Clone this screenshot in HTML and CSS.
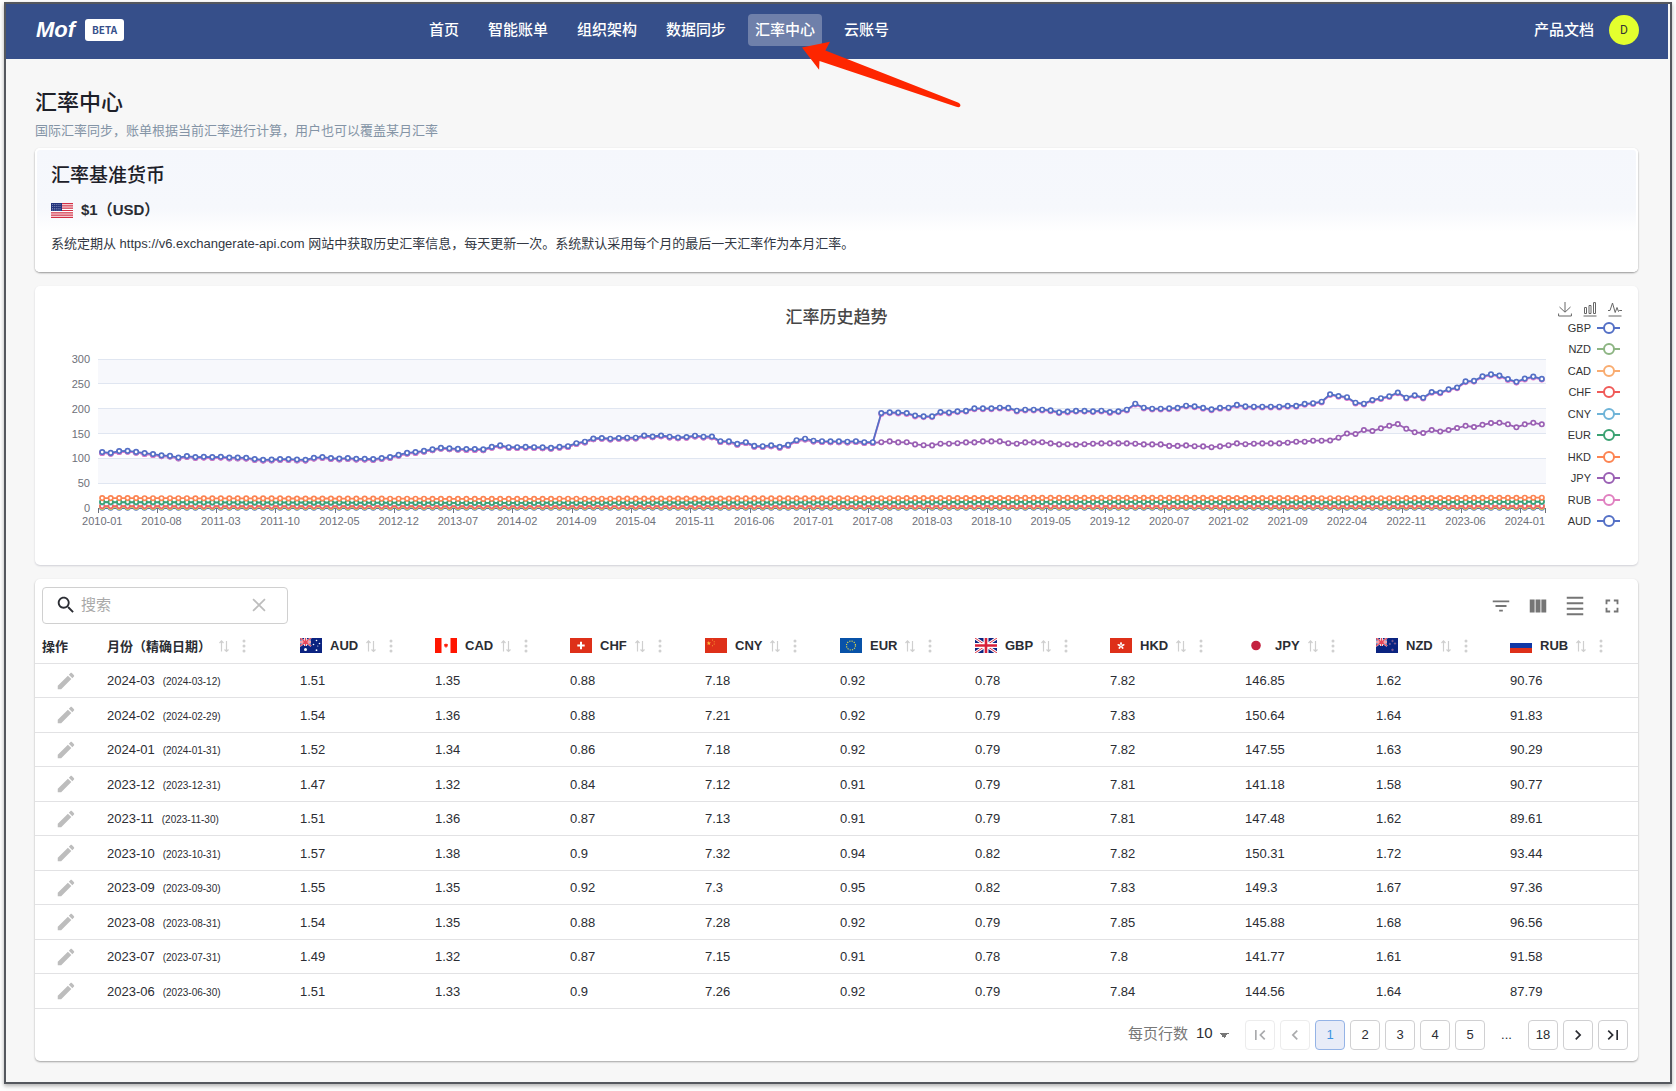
FILE: index.html
```html
<!DOCTYPE html>
<html lang="zh-CN">
<head>
<meta charset="utf-8">
<meta name="viewport" content="width=device-width, initial-scale=1">
<title>汇率中心 - Mof</title>
<link rel="stylesheet" href="styles.css">
</head>
<body>
<svg class="sprite" aria-hidden="true">
  <symbol id="i-search" viewBox="0 0 24 24"><path d="M15.5 14h-.79l-.28-.27C15.41 12.59 16 11.11 16 9.5 16 5.91 13.09 3 9.5 3S3 5.91 3 9.5 5.91 16 9.5 16c1.61 0 3.09-.59 4.23-1.57l.27.28v.79l5 4.99L20.49 19l-4.99-5zm-6 0C7.01 14 5 11.99 5 9.5S7.01 5 9.5 5 14 7.01 14 9.5 11.99 14 9.5 14z"/></symbol>
  <symbol id="i-close" viewBox="0 0 24 24"><path d="M5.5 5.5l13 13M18.500 5.500l-13 13" fill="none" stroke="currentColor" stroke-width="1.900"/></symbol>
  <symbol id="i-filter" viewBox="0 0 24 24"><path d="M10 18h4v-2h-4v2zM3 6v2h18V6H3zm3 7h12v-2H6v2z"/></symbol>
  <symbol id="i-columns" viewBox="0 0 24 24"><path d="M14.670 5v14H9.330V5h5.340zm1 14H21V5h-5.330v14zm-7.340 0V5H3v14h5.330z"/></symbol>
  <symbol id="i-density" viewBox="0 0 24 24"><path d="M3 2h18v2H3zm0 18h18v2H3zm0-6h18v2H3zm0-6h18v2H3z"/></symbol>
  <symbol id="i-full" viewBox="0 0 24 24"><path d="M7 14H5v5h5v-2H7v-3zm-2-4h2V7h3V5H5v5zm12 7h-3v2h5v-5h-2v3zM14 5v2h3v3h2V5h-5z"/></symbol>
  <symbol id="i-edit" viewBox="0 0 24 24"><path d="M3 17.250V21h3.750L17.810 9.940l-3.750-3.750L3 17.250zM20.710 7.040c.39-.39.39-1.020 0-1.410l-2.340-2.340c-.39-.39-1.020-.39-1.410 0l-1.830 1.830 3.750 3.750 1.830-1.830z"/></symbol>
  <symbol id="i-sort" viewBox="0 0 10 14"><path d="M2.500 12.500V2M.5 4l2-2.200 2 2.200M7.500 2v10M5.500 10.500l2 2 2-2" fill="none" stroke="currentColor" stroke-width="1.200"/></symbol>
  <symbol id="i-more" viewBox="0 0 4 14"><circle cx="2" cy="2" r="1.500"/><circle cx="2" cy="7" r="1.500"/><circle cx="2" cy="12" r="1.500"/></symbol>
  <symbol id="i-prev" viewBox="0 0 24 24"><path d="M15.410 7.410 14 6l-6 6 6 6 1.410-1.410L10.830 12z"/></symbol>
  <symbol id="i-next" viewBox="0 0 24 24"><path d="M10 6 8.590 7.410 13.170 12l-4.580 4.590L10 18l6-6z"/></symbol>
  <symbol id="i-first" viewBox="0 0 24 24"><path d="M18.410 16.590 13.820 12l4.590-4.590L17 6l-6 6 6 6zM6 6h2v12H6z"/></symbol>
  <symbol id="i-last" viewBox="0 0 24 24"><path d="M5.590 7.410 10.180 12l-4.590 4.590L7 18l6-6-6-6zM16 6h2v12h-2z"/></symbol>
  <symbol id="f-us" viewBox="0 0 22 15"><path fill="#fff" d="M0 0h22v15H0z"/><path d="M0 .6h22M0 2.900h22M0 5.200h22M0 7.500h22M0 9.800h22M0 12.100h22M0 14.400h22" stroke="#d22f45" stroke-width="1.200"/><path fill="#23347c" d="M0 0h11v8H0z"/><path d="M1 1.500h9.500M1 3.500h9.500M1 5.500h9.500M1 7h9.500" stroke="#b9c1e0" stroke-width=".7" stroke-dasharray=".8 1.100"/></symbol>
  <symbol id="f-aud" viewBox="0 0 22 15"><path fill="#0b2380" d="M0 0h22v15H0z"/><path d="M0 0l11 8M11 0L0 8" stroke="#fff" stroke-width="1.800"/><path d="M5.500 0v8M0 4h11" stroke="#fff" stroke-width="2.800"/><path d="M5.500 0v8M0 4h11M0 0l11 8M11 0L0 8" stroke="#e8485a" stroke-width="1.200"/><g fill="#fff"><circle cx="5.500" cy="11.500" r="1.500"/><circle cx="16.500" cy="2.500" r=".8"/><circle cx="13.500" cy="6.500" r=".8"/><circle cx="19.500" cy="5.500" r=".8"/><circle cx="16.500" cy="12.200" r=".9"/><circle cx="17.800" cy="8" r=".5"/></g></symbol>
  <symbol id="f-nzd" viewBox="0 0 22 15"><path fill="#0b2380" d="M0 0h22v15H0z"/><path d="M0 0l11 8M11 0L0 8" stroke="#fff" stroke-width="1.800"/><path d="M5.500 0v8M0 4h11" stroke="#fff" stroke-width="2.800"/><path d="M5.500 0v8M0 4h11M0 0l11 8M11 0L0 8" stroke="#e8485a" stroke-width="1.200"/><g fill="#a8406a" stroke="#7f8cc0" stroke-width=".4"><circle cx="16.500" cy="3" r=".8"/><circle cx="13.800" cy="6" r=".8"/><circle cx="19" cy="5.500" r=".8"/><circle cx="16.500" cy="11.800" r=".9"/></g></symbol>
  <symbol id="f-cad" viewBox="0 0 22 15"><path fill="#fff" d="M0 0h22v15H0z"/><path fill="#ff1500" d="M0 0h6.500v15H0zM15.500 0H22v15h-6.500zM11 5.200l.7 1.100 1.200-.2-.3 1.300.4.800-1.600.6-.1 1.200h-.6l-.1-1.200-1.600-.6.4-.8-.3-1.300 1.200.2z"/></symbol>
  <symbol id="f-chf" viewBox="0 0 22 15"><path fill="#de3019" d="M0 0h22v15H0z"/><path d="M11 3.800v7.400M7.300 7.500h7.400" stroke="#fff" stroke-width="2"/></symbol>
  <symbol id="f-cny" viewBox="0 0 22 15"><path fill="#de3019" d="M0 0h22v15H0z"/><g fill="#ffb83b"><path d="M3.800 3l.6 1.500 1.600.1-1.200 1 .4 1.500-1.400-.9-1.300.9.4-1.500-1.300-1 1.600-.1z"/><circle cx="7.500" cy="2" r=".5"/><circle cx="9.200" cy="3.800" r=".5"/><circle cx="9.200" cy="6" r=".5"/><circle cx="7.500" cy="7.800" r=".5"/></g></symbol>
  <symbol id="f-eur" viewBox="0 0 22 15"><path fill="#0852a8" d="M0 0h22v15H0z"/><circle cx="11" cy="7.500" r="4.500" fill="none" stroke="#d8d148" stroke-width="1.200" stroke-dasharray="1.200 1.156"/></symbol>
  <symbol id="f-gbp" viewBox="0 0 22 15"><path fill="#0b2380" d="M0 0h22v15H0z"/><path d="M0 0l22 15M22 0L0 15" stroke="#fff" stroke-width="3"/><path d="M0 0l22 15M22 0L0 15" stroke="#e0384a" stroke-width="1"/><path d="M11 0v15M0 7.500h22" stroke="#fff" stroke-width="5"/><path d="M11 0v15M0 7.500h22" stroke="#d8203a" stroke-width="2.600"/></symbol>
  <symbol id="f-hkd" viewBox="0 0 22 15"><path fill="#de3019" d="M0 0h22v15H0z"/><g fill="#fff"><ellipse cx="11" cy="5.600" rx=".9" ry="1.700"/><ellipse cx="11" cy="5.600" rx=".9" ry="1.700" transform="rotate(72 11 7.700)"/><ellipse cx="11" cy="5.600" rx=".9" ry="1.700" transform="rotate(144 11 7.700)"/><ellipse cx="11" cy="5.600" rx=".9" ry="1.700" transform="rotate(216 11 7.700)"/><ellipse cx="11" cy="5.600" rx=".9" ry="1.700" transform="rotate(288 11 7.700)"/></g></symbol>
  <symbol id="f-jpy" viewBox="0 0 22 15"><path fill="#fff" d="M0 0h22v15H0z"/><circle cx="11" cy="7.500" r="4.800" fill="#c4213f"/></symbol>
  <symbol id="f-rub" viewBox="0 0 22 15"><path fill="#fff" d="M0 0h22v5H0z"/><path fill="#1038a6" d="M0 5h22v5H0z"/><path fill="#de3019" d="M0 10h22v5H0z"/></symbol>
</svg>

<div class="frame">
  <header class="topbar">
    <div class="brand"><span class="brand-name">Mof</span><span class="brand-tag">BETA</span></div>
    <nav class="nav">
      <a href="#">首页</a>
      <a href="#">智能账单</a>
      <a href="#">组织架构</a>
      <a href="#">数据同步</a>
      <a href="#" class="is-active" aria-current="page">汇率中心<svg class="pointer" viewBox="0 0 162 70" aria-hidden="true"><path fill="#fe2600" d="M1 6.500 29 .8l-4.600 8.700L157 61.500q3 1.500 2.300 3.500-1 2-4 .8L18.500 20l-.4 8.800z"/></svg></a>
      <a href="#">云账号</a>
    </nav>
    <div class="account">
      <a href="#">产品文档</a>
      <button type="button" class="avatar">D</button>
    </div>
  </header>

  <main class="page">
    <h1>汇率中心</h1>
    <p class="lead">国际汇率同步，账单根据当前汇率进行计算，用户也可以覆盖某月汇率</p>

    <div class="stack">
      <section class="card base">
        <h2>汇率基准货币</h2>
        <p class="base-rate"><svg class="flag"><use href="#f-us"/></svg><span>$1（USD）</span></p>
        <p class="base-note">系统定期从 https://v6.exchangerate-api.com 网站中获取历史汇率信息，每天更新一次。系统默认采用每个月的最后一天汇率作为本月汇率。</p>
      </section>

      <section class="card trend">
        <h2>汇率历史趋势</h2>
        <div class="plot" id="plot"></div>
        <div class="side">
          <div class="toolbox">
            <button type="button" aria-label="保存图片"><svg viewBox="0 0 14 15"><path d="M7 0v10M1.500 5 7 10.200 12.500 5M.6 11.500v2.500h12.800v-2.500"/></svg></button>
            <button type="button" aria-label="柱状图"><svg viewBox="0 0 14 15"><path d="M1.500 5.500h2v6h-2zM6 3.500h2v8H6zM10.500.6h2v10.900h-2zM.5 14h13"/></svg></button>
            <button type="button" aria-label="折线图"><svg viewBox="0 0 14 15"><path d="M0 8.500h2L4.500 1l2.700 9.500L9 5.500l1.500 4 .8-1H14M.5 14h13"/></svg></button>
          </div>
          <div class="legend">
            <button type="button" class="s-blue">GBP<i></i></button>
            <button type="button" class="s-green">NZD<i></i></button>
            <button type="button" class="s-amber">CAD<i></i></button>
            <button type="button" class="s-red">CHF<i></i></button>
            <button type="button" class="s-sky">CNY<i></i></button>
            <button type="button" class="s-teal">EUR<i></i></button>
            <button type="button" class="s-orange">HKD<i></i></button>
            <button type="button" class="s-purple">JPY<i></i></button>
            <button type="button" class="s-pink">RUB<i></i></button>
            <button type="button" class="s-blue">AUD<i></i></button>
          </div>
        </div>
      </section>

      <section class="card rates">
        <div class="toolbar">
          <div class="search">
            <svg class="icon"><use href="#i-search"/></svg>
            <input type="text" placeholder="搜索" aria-label="搜索">
            <button type="button" aria-label="清除"><svg class="icon"><use href="#i-close"/></svg></button>
          </div>
          <div class="tools">
            <button type="button" aria-label="筛选"><svg class="icon"><use href="#i-filter"/></svg></button>
            <button type="button" aria-label="列"><svg class="icon"><use href="#i-columns"/></svg></button>
            <button type="button" aria-label="密度"><svg class="icon"><use href="#i-density"/></svg></button>
            <button type="button" aria-label="全屏"><svg class="icon"><use href="#i-full"/></svg></button>
          </div>
        </div>

        <table>
          <colgroup><col class="w-op"><col class="w-month"><col class="w-cur" span="7"><col class="w-jpy"><col class="w-nzd"><col class="w-rub"></colgroup>
          <thead>
            <tr>
              <th>操作</th>
              <th><div class="head">月份（精确日期）<svg class="sort"><use href="#i-sort"/></svg><svg class="more"><use href="#i-more"/></svg></div></th>
              <th><div class="head"><svg class="flag"><use href="#f-aud"/></svg>AUD<svg class="sort"><use href="#i-sort"/></svg><svg class="more"><use href="#i-more"/></svg></div></th>
              <th><div class="head"><svg class="flag"><use href="#f-cad"/></svg>CAD<svg class="sort"><use href="#i-sort"/></svg><svg class="more"><use href="#i-more"/></svg></div></th>
              <th><div class="head"><svg class="flag"><use href="#f-chf"/></svg>CHF<svg class="sort"><use href="#i-sort"/></svg><svg class="more"><use href="#i-more"/></svg></div></th>
              <th><div class="head"><svg class="flag"><use href="#f-cny"/></svg>CNY<svg class="sort"><use href="#i-sort"/></svg><svg class="more"><use href="#i-more"/></svg></div></th>
              <th><div class="head"><svg class="flag"><use href="#f-eur"/></svg>EUR<svg class="sort"><use href="#i-sort"/></svg><svg class="more"><use href="#i-more"/></svg></div></th>
              <th><div class="head"><svg class="flag"><use href="#f-gbp"/></svg>GBP<svg class="sort"><use href="#i-sort"/></svg><svg class="more"><use href="#i-more"/></svg></div></th>
              <th><div class="head"><svg class="flag"><use href="#f-hkd"/></svg>HKD<svg class="sort"><use href="#i-sort"/></svg><svg class="more"><use href="#i-more"/></svg></div></th>
              <th><div class="head"><svg class="flag"><use href="#f-jpy"/></svg>JPY<svg class="sort"><use href="#i-sort"/></svg><svg class="more"><use href="#i-more"/></svg></div></th>
              <th><div class="head"><svg class="flag"><use href="#f-nzd"/></svg>NZD<svg class="sort"><use href="#i-sort"/></svg><svg class="more"><use href="#i-more"/></svg></div></th>
              <th><div class="head"><svg class="flag"><use href="#f-rub"/></svg>RUB<svg class="sort"><use href="#i-sort"/></svg><svg class="more"><use href="#i-more"/></svg></div></th>
            </tr>
          </thead>
          <tbody>
            <tr><td><button type="button" class="edit" aria-label="编辑"><svg class="icon"><use href="#i-edit"/></svg></button></td><td>2024-03<small>(2024-03-12)</small></td><td>1.51</td><td>1.35</td><td>0.88</td><td>7.18</td><td>0.92</td><td>0.78</td><td>7.82</td><td>146.85</td><td>1.62</td><td>90.76</td></tr>
            <tr><td><button type="button" class="edit" aria-label="编辑"><svg class="icon"><use href="#i-edit"/></svg></button></td><td>2024-02<small>(2024-02-29)</small></td><td>1.54</td><td>1.36</td><td>0.88</td><td>7.21</td><td>0.92</td><td>0.79</td><td>7.83</td><td>150.64</td><td>1.64</td><td>91.83</td></tr>
            <tr><td><button type="button" class="edit" aria-label="编辑"><svg class="icon"><use href="#i-edit"/></svg></button></td><td>2024-01<small>(2024-01-31)</small></td><td>1.52</td><td>1.34</td><td>0.86</td><td>7.18</td><td>0.92</td><td>0.79</td><td>7.82</td><td>147.55</td><td>1.63</td><td>90.29</td></tr>
            <tr><td><button type="button" class="edit" aria-label="编辑"><svg class="icon"><use href="#i-edit"/></svg></button></td><td>2023-12<small>(2023-12-31)</small></td><td>1.47</td><td>1.32</td><td>0.84</td><td>7.12</td><td>0.91</td><td>0.79</td><td>7.81</td><td>141.18</td><td>1.58</td><td>90.77</td></tr>
            <tr><td><button type="button" class="edit" aria-label="编辑"><svg class="icon"><use href="#i-edit"/></svg></button></td><td>2023-11<small>(2023-11-30)</small></td><td>1.51</td><td>1.36</td><td>0.87</td><td>7.13</td><td>0.91</td><td>0.79</td><td>7.81</td><td>147.48</td><td>1.62</td><td>89.61</td></tr>
            <tr><td><button type="button" class="edit" aria-label="编辑"><svg class="icon"><use href="#i-edit"/></svg></button></td><td>2023-10<small>(2023-10-31)</small></td><td>1.57</td><td>1.38</td><td>0.9</td><td>7.32</td><td>0.94</td><td>0.82</td><td>7.82</td><td>150.31</td><td>1.72</td><td>93.44</td></tr>
            <tr><td><button type="button" class="edit" aria-label="编辑"><svg class="icon"><use href="#i-edit"/></svg></button></td><td>2023-09<small>(2023-09-30)</small></td><td>1.55</td><td>1.35</td><td>0.92</td><td>7.3</td><td>0.95</td><td>0.82</td><td>7.83</td><td>149.3</td><td>1.67</td><td>97.36</td></tr>
            <tr><td><button type="button" class="edit" aria-label="编辑"><svg class="icon"><use href="#i-edit"/></svg></button></td><td>2023-08<small>(2023-08-31)</small></td><td>1.54</td><td>1.35</td><td>0.88</td><td>7.28</td><td>0.92</td><td>0.79</td><td>7.85</td><td>145.88</td><td>1.68</td><td>96.56</td></tr>
            <tr><td><button type="button" class="edit" aria-label="编辑"><svg class="icon"><use href="#i-edit"/></svg></button></td><td>2023-07<small>(2023-07-31)</small></td><td>1.49</td><td>1.32</td><td>0.87</td><td>7.15</td><td>0.91</td><td>0.78</td><td>7.8</td><td>141.77</td><td>1.61</td><td>91.58</td></tr>
            <tr><td><button type="button" class="edit" aria-label="编辑"><svg class="icon"><use href="#i-edit"/></svg></button></td><td>2023-06<small>(2023-06-30)</small></td><td>1.51</td><td>1.33</td><td>0.9</td><td>7.26</td><td>0.92</td><td>0.79</td><td>7.84</td><td>144.56</td><td>1.64</td><td>87.79</td></tr>
          </tbody>
        </table>

        <div class="pager">
          <div class="page-size">
            <label for="page-size">每页行数</label>
            <select id="page-size"><option>10</option><option>20</option><option>50</option></select>
          </div>
          <div class="pages">
            <button type="button" disabled aria-label="首页"><svg><use href="#i-first"/></svg></button>
            <button type="button" disabled aria-label="上一页"><svg><use href="#i-prev"/></svg></button>
            <button type="button" class="is-current">1</button>
            <button type="button">2</button>
            <button type="button">3</button>
            <button type="button">4</button>
            <button type="button">5</button>
            <span>...</span>
            <button type="button">18</button>
            <button type="button" aria-label="下一页"><svg><use href="#i-next"/></svg></button>
            <button type="button" aria-label="末页"><svg><use href="#i-last"/></svg></button>
          </div>
        </div>
      </section>
    </div>
  </main>
</div>
<script src="chart.js"></script>
</body>
</html>
```

FILE: styles.css
```css
*, *::before { box-sizing: border-box; }

body {
  margin: 0;
  padding: 2px 4px 7px;
  background: #fdfdfd;
  color: #2b2d33;
  font-family: "Liberation Sans", "Noto Sans CJK SC", sans-serif;
  font-size: 13px;
}

h1, h2, p { margin: 0; font-weight: 500; }
a { color: inherit; text-decoration: none; }
button, input, select { font: inherit; color: inherit; }
button { padding: 0; border: 0; background: none; cursor: pointer; }
svg { display: block; }

.sprite { position: absolute; width: 0; height: 0; }
.icon { width: 22px; height: 22px; fill: currentColor; }
.flag { width: 22px; height: 15px; }

.frame {
  border: 2px solid #55585e;
  background: #f7f7f7;
  box-shadow: 0 2px 4px rgba(0, 0, 0, .3);
}

/* Top bar */
.topbar {
  display: flex;
  align-items: center;
  height: 55px;
  margin-right: 2px;
  padding: 0 29px 4px 30px;
  background: #364f8a;
  color: #fff;
  font-size: 15px;
  font-weight: 500;
  line-height: 32px;
}
.brand { display: flex; align-items: center; gap: 10px; width: 386px; }
.brand-name { font-size: 22px; font-weight: 700; font-style: italic; }
.brand-tag {
  width: 39px;
  border-radius: 3px;
  background: #fff;
  color: #364f8a;
  font: 700 10px/22px "Noto Sans CJK SC", sans-serif;
  text-align: center;
}
.nav { display: flex; gap: 15px; white-space: nowrap; }
.nav a { position: relative; padding: 0 7px; border-radius: 4px; }
.nav .is-active { background: #6f80aa; }
.pointer { position: absolute; left: 53px; top: 27px; z-index: 1; width: 162px; height: 70px; }
.account { display: flex; align-items: center; gap: 15px; margin-left: auto; }
.avatar {
  width: 30px;
  height: 30px;
  border-radius: 50%;
  background: #e4ff2e;
  color: #333;
  font: 400 12px Roboto, sans-serif;
}

/* Page */
.page { padding: 27px 32px 21px 29px; }
h1 { font-size: 22px; line-height: 34px; color: #1d2029; }
.lead { margin: 2px 0 8px; font-size: 13px; line-height: 18px; font-weight: 400; color: #8494a6; }
.stack { display: flex; flex-direction: column; gap: 14px; }
.card { border-radius: 5px; background: #fff; box-shadow: 0 1px 2px rgba(30, 30, 60, .18); }

.base {
  padding: 14px 16px 18px;
  border-radius: 5px;
  background: linear-gradient(#f5f7fc 0, #f6f8fc 60px, #fff 84px);
  box-shadow: inset 0 0 0 2px #fff, 0 1px 2px rgba(0, 0, 0, .4);
}
.base h2 { font-size: 19px; line-height: 28px; color: #1d2029; }
.base-rate { display: flex; align-items: center; gap: 8px; margin-top: 8px; font-size: 15px; line-height: 24px; font-weight: 700; }
.base-note { margin-top: 12px; line-height: 20px; font-weight: 400; color: #333843; }

/* Trend chart */
.trend {
  display: grid;
  grid-template-columns: minmax(0, 1fr) 64px;
  grid-template-rows: 32px 199px;
  column-gap: 11px;
  padding: 16px 16px 32px;
}
.trend h2 { grid-area: 1 / 1 / 2 / 3; font-size: 17px; line-height: 32px; text-align: center; color: #464646; }
.plot { grid-area: 2 / 1; }
.plot svg { width: 100%; height: 198px; overflow: visible; }
.plot text { font-size: 11px; fill: #6e7079; }
.side { grid-area: 1 / 2 / 3 / 3; display: flex; flex-direction: column; }
.toolbox { display: flex; justify-content: space-between; }
.toolbox svg { width: 14px; height: 15px; fill: none; stroke: #666; stroke-width: 1; }
.legend { display: flex; flex-direction: column; flex: 1; padding: 0 2px 1px 0; }
.legend button { display: flex; flex: 1; align-items: center; justify-content: flex-end; gap: 6px; font-size: 11px; color: #333; }
.legend i {
  display: grid;
  place-items: center;
  width: 23px;
  height: 12px;
  background: linear-gradient(var(--line), var(--line)) center / 100% 2px no-repeat;
}
.legend i::before {
  content: "";
  width: 12px;
  height: 12px;
  border: 2px solid var(--line);
  border-radius: 50%;
  background: #fff;
}
.s-blue { --line: #5470c6; }
.s-green { --line: #8db583; }
.s-amber { --line: #f9ac70; }
.s-red { --line: #f05a58; }
.s-sky { --line: #6fb4d8; }
.s-teal { --line: #3ba272; }
.s-orange { --line: #fc8452; }
.s-purple { --line: #9a60b4; }
.s-pink { --line: #e080c0; }

/* Rates table */
.rates { box-shadow: 0 1px 2px rgba(0, 0, 0, .35); }
.toolbar { display: flex; justify-content: space-between; padding: 8px 8px 4px 7px; }
.search {
  display: flex;
  align-items: center;
  width: 246px;
  height: 37px;
  padding: 0 17px 2px 12px;
  border: 1px solid #d0d0d0;
  border-radius: 4px;
}
.search input {
  flex: 1;
  min-width: 0;
  margin-left: 4px;
  padding: 0;
  border: 0;
  outline: 0;
  background: none;
  font-size: 15px;
}
.search input::placeholder { color: #a9a9a9; }
.search button { color: #bdbdbd; }
.tools { display: flex; align-items: center; color: #757575; }
.tools button { display: grid; place-items: center; width: 37px; height: 37px; }

table { width: 100%; table-layout: fixed; border-collapse: separate; border-spacing: 0; }
.w-op { width: 65px; }
.w-month { width: 193px; }
.w-cur { width: 135px; }
.w-jpy { width: 131px; }
.w-nzd { width: 134px; }
.w-rub { width: 135px; }
th, td { height: 34px; padding: 0 7px; border-bottom: 1px solid #e2e2e4; text-align: left; white-space: nowrap; }
th { height: 36px; font-weight: 700; }
tbody tr:nth-child(even) td { height: 35px; }
.head { display: flex; align-items: center; }
.head .flag { margin-right: 8px; }
.sort { width: 10px; height: 14px; margin-left: 8px; color: #cfcfcf; }
.more { width: 4px; height: 14px; margin-left: 13px; fill: #d0d0d0; }
.edit { display: block; margin-left: 13px; color: #bdbdbd; }
small { margin-left: 8px; font-size: 10px; }

.pager { display: flex; align-items: center; justify-content: flex-end; height: 52px; padding: 0 10px 1px; }
.page-size { display: flex; align-items: center; gap: 8px; margin-right: 16px; padding-bottom: 4px; font-size: 15px; }
.page-size label { color: #777; }
.page-size select {
  width: 33px;
  height: 20px;
  padding: 0;
  border: 0;
  appearance: none;
  background:
    linear-gradient(45deg, transparent 50%, #777 50%) 23px 10px / 5px 5px no-repeat,
    linear-gradient(-45deg, transparent 50%, #777 50%) 28px 10px / 5px 5px no-repeat;
}
.pages { display: flex; align-items: center; gap: 5px; }
.pages button { display: grid; place-items: center; width: 30px; height: 30px; border: 1px solid #d0d0d2; border-radius: 4px; }
.pages button:disabled { opacity: .4; }
.pages svg { width: 20px; height: 20px; fill: currentColor; }
.pages span { width: 33px; text-align: center; }
.pages .is-current { border-color: #94b3e6; background: #e8ecf8; color: #3d95e0; }
```

FILE: chart.js
```js
// Stacked totals per month, 2010-01 to 2024-03.
const early = [112.5,111,114.5,115,113,110.5,108.5,106,105,101.5,104.5,102.5,103,102.5,103,101.5,101.5,101,98.5,97,97.5,98.5,98.5,97.5,97,101,102.5,100.5,99.5,100.5,99,99,98.5,100.5,102.5,107,111,112.5,115,118,121,120,119,118.5,118.5,118,123,126,122.5,122.5,123,122.5,122,121,123,124.5,130.5,133.5,140,141,139.5,141,141.5,141.5,146,144,146,143.5,142,143,145.5,143.5,144,134.5,134,129,132.5,125,124.5,126,123,127,136.5,139.5,135.5,134.5,134,134,133.5,134.5,132.5,132.5];
const lateTotal = [191,192.5,192,191,186,184.5,184.5,193,192,194.5,195.5,200.5,200.5,200.5,202,201.5,196,198,198,198,196.5,192.5,194,195.5,195.5,194.5,196,193,194.5,198,210,202,200,200,200.5,201.5,206,204.5,201.5,198.5,201.5,202,207.5,204.5,204,204,204,204,205.5,205.5,209.5,211,214,229,225.5,223,212,210,217.5,221,225,232.5,222,227,222,233.5,232.5,239,242.5,255,256,265,269,266.5,259.5,254,260.5,264.5,260];
const lateJpy = [132.5,134,132,132.5,128,126.5,126,129.5,129.5,130.5,132,132,134,134,134,130.5,129.5,132,132,132.5,130,128,128.5,127.5,128.5,129.5,130,130,130,130,129.5,128,128,128,125,125,126,124.5,124,122.5,124,126.5,130,128.5,129.5,130,130,130,131.5,133.5,133.5,135.5,135.5,136,141.5,150,149,157,155,160.5,165.5,169,159.5,152.5,151,157,154,157,161,165.5,163,167.5,171,171.5,168.5,162.5,168.5,171.5,168.5];

const total = early.concat(lateTotal);
const jpy = early.map(v => v - 1.6).concat(lateJpy);
const count = total.length;

const stops = [[0, 20], [45, 18.4], [60, 18.8], [120, 20.6], [150, 19.6], [170, 20.8]];
function hkdAt(i) {
  const k = stops.findIndex(s => s[0] >= i);
  if (k <= 0) return stops[0][1];
  const [x0, y0] = stops[k - 1];
  const [x1, y1] = stops[k];
  return y0 + (y1 - y0) * (i - x0) / (x1 - x0);
}
const hkd = total.map((_, i) => hkdAt(i));

const series = [
  ['#5470c6', total.map(() => 0.7)],
  ['#91cc75', total.map(() => 1.9)],
  ['#fac858', total.map(() => 3)],
  ['#ee6666', total.map(() => 3.9)],
  ['#73c0de', hkd.map(v => v - 8.8)],
  ['#3ba272', hkd.map(v => v - 8)],
  ['#fc8452', hkd],
  ['#9a60b4', jpy],
  ['#ea7ccc', total.map(v => v - 1.5)],
  ['#5470c6', total]
];

const LEFT = 47, TOP = 25, HEIGHT = 149, MAX = 300;

function label(i) {
  return (2010 + Math.floor(i / 12)) + '-' + String(i % 12 + 1).padStart(2, '0');
}

function draw() {
  const host = document.getElementById('plot');
  const right = host.clientWidth - 1;
  const step = (right - LEFT) / count;
  const y = v => TOP + HEIGHT * (1 - v / MAX);
  const x = i => LEFT + step * (i + 0.5);
  let out = '';

  for (let v = 300; v > 0; v -= 100) {
    out += `<rect x="${LEFT}" y="${y(v)}" width="${right - LEFT}" height="${HEIGHT / 6}" fill="#f7f8fc"/>`;
  }
  for (let v = 0; v <= 300; v += 50) {
    const ly = Math.floor(y(v)) + 0.5;
    out += `<path d="M${LEFT} ${ly}H${right}" stroke="${v ? '#e0e6f1' : '#6e7079'}"/>`;
    out += `<text x="${LEFT - 8}" y="${Math.round(y(v)) + 4}" text-anchor="end">${v}</text>`;
  }
  for (let i = 0; i < count; i += 7) {
    const tx = Math.floor(LEFT + step * i) + 0.5;
    out += `<path d="M${tx} ${y(0)}v5" stroke="#6e7079"/>`;
    out += `<text x="${x(i)}" y="191" text-anchor="middle">${label(i)}</text>`;
  }
  out += `<path d="M${right - 0.5} ${y(0)}v5" stroke="#6e7079"/>`;

  for (const [color, data] of series) {
    const pts = data.map((v, i) => `${x(i).toFixed(1)},${y(v).toFixed(1)}`);
    out += `<polyline points="${pts.join(' ')}" fill="none" stroke="${color}" stroke-width="1.8"/>`;
    out += `<g fill="#fff" stroke="${color}" stroke-width="1.7">` +
      data.map((v, i) => `<circle cx="${x(i).toFixed(1)}" cy="${y(v).toFixed(1)}" r="2.2"/>`).join('') + '</g>';
  }
  host.innerHTML = `<svg role="img" aria-label="汇率历史趋势">${out}</svg>`;
}

draw();
window.addEventListener('resize', draw);
```
